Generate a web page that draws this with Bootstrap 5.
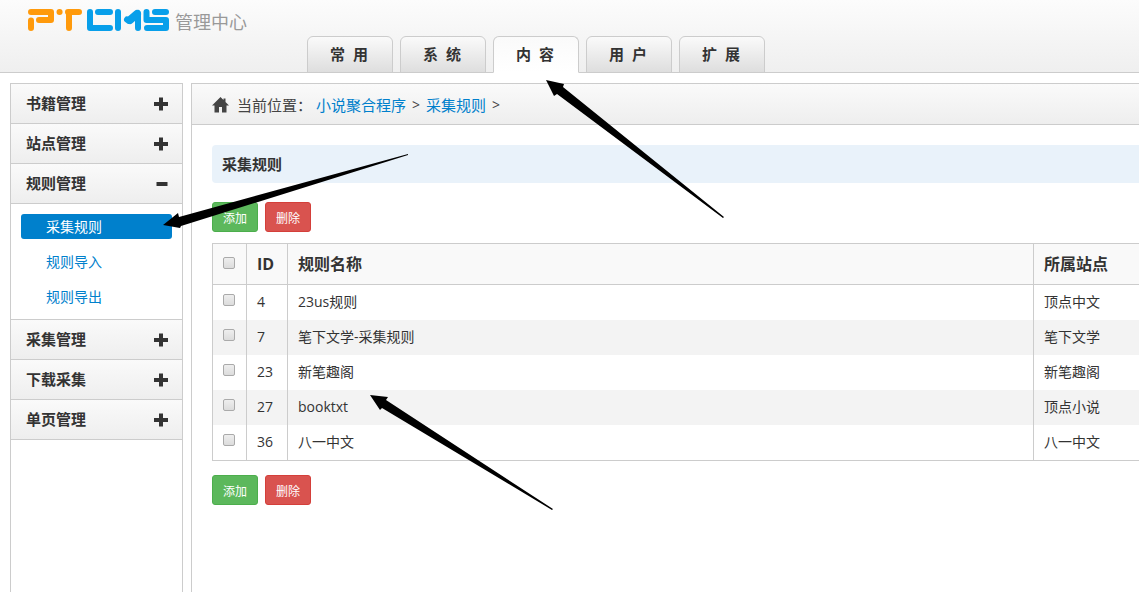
<!DOCTYPE html>
<html lang="zh-CN">
<head>
<meta charset="utf-8">
<meta name="viewport" content="width=device-width, initial-scale=1">
<title>PTCMS 管理中心</title>
<link href="https://cdn.jsdelivr.net/npm/bootstrap@5.3.0/dist/css/bootstrap.min.css" rel="stylesheet">
<style>
  :root { --line: #ccc; --blue: #0080cc; --ink: #333; }
  body { font-family: "Open Sans", "Noto Sans CJK SC", sans-serif; font-size: 14px; line-height: 20px; color: var(--ink); overflow-x: hidden; }
  a { color: var(--blue); text-decoration: none; }
  .topbar { height: 73px; background: linear-gradient(#fcfcfc, #efefef); border-bottom: 1px solid var(--line); padding-left: 28px; }
  .brand-area { width: 279px; padding-top: 9px; gap: 5px; }
  .brand-title { font-size: 18px; line-height: 26px; color: #999; }
  .main-tabs { gap: 7px; margin-bottom: -1px; border: 0; }
  .main-tabs .nav-link { width: 86px; height: 37px; padding: 0 2px 0 0; border: 1px solid var(--line); border-radius: 6px 6px 0 0; margin: 0; background: linear-gradient(#fafafa, #dedede); color: var(--ink); font-size: 15px; font-weight: 700; line-height: 35px; text-align: center; }
  .main-tabs .nav-link.active { background: linear-gradient(#fafafa, #fff); border-color: var(--line) var(--line) #fff; color: var(--ink); }
  .workspace { padding: 10px 0 0 10px; gap: 8px; }
  .side-menu { width: 173px; border: 1px solid var(--line); border-bottom: 0; }
  .menu-head { height: 40px; padding: 0 14px 2px 15px; border: 0; border-bottom: 1px solid var(--line); background: linear-gradient(#fafafa, #eee); color: var(--ink); font-size: 15px; font-weight: 700; }
  .menu-head svg { margin-top: 2px; }
  .submenu { padding: 10px; gap: 10px; border-bottom: 1px solid var(--line); }
  .submenu a { height: 25px; line-height: 25px; padding-left: 25px; border-radius: 3px; }
  .submenu a.current { background: var(--blue); color: #fff; }
  .content-panel { border: solid var(--line); border-width: 1px 0 0 1px; min-width: 0; }
  .crumbs { height: 41px; padding: 2px 0 0 20px; border-bottom: 1px solid var(--line); background: linear-gradient(#fafafa, #eee); font-size: 15px; color: #444; }
  .crumbs .arrow { padding: 0 6px; font-size: 14px; }
  .section-title { height: 38px; line-height: 38px; padding-left: 10px; margin: 0; border-radius: 4px 0 0 4px; background: #e9f2fa; font-size: 15px; font-weight: 700; }
  .panel-body { padding: 20px 0 0 20px; }
  .tools { gap: 7px; }
  .section-title + .tools { margin-top: 19px; }
  .tools .btn { width: 46px; height: 30px; padding: 4px 0 0; font-size: 12px; line-height: 22px; border-radius: 3px; color: #fff; }
  .btn-add { background: #5cb85c; border-color: #4cae4c; }
  .btn-del { background: #d9534f; border-color: #d43f3a; }
  .rules { margin: 11px 0 14px; border: solid var(--line); border-width: 1px 0 1px 1px; border-collapse: separate; border-spacing: 0; table-layout: fixed; color: var(--ink); }
  .rules > :not(caption) > * > * { padding: 0 10px; height: 35px; border: 0 solid var(--line); border-right-width: 1px; vertical-align: middle; box-shadow: none; background: transparent; color: var(--ink); }
  .rules > :not(caption) > * > :last-child { border-right: 0; }
  .rules > thead > tr > th { height: 41px; border-bottom-width: 1px; background: #f9f9f9; font-size: 16px; }
  .rules > tbody > tr > td { padding-bottom: 2px; }
  .rules > tbody > tr:nth-child(even) > td { background: #f3f3f3; }
  .col-tick { width: 34px; } .col-num { width: 41px; } .col-site { width: 105px; }
  .tick { appearance: none; display: block; width: 12px; height: 12px; margin: 0 0 3px; border: 1px solid #aaa; border-radius: 2px; background: linear-gradient(#eee, #dcdcdc); }
  thead .tick { margin-bottom: 2px; }
  .tick:checked { background: var(--blue); }
  .pointers { position: absolute; top: 0; left: 0; pointer-events: none; }
</style>
</head>
<body>
<div class="d-flex flex-column min-vh-100 position-relative">
  <header class="topbar d-flex">
    <div class="brand-area d-flex align-items-start flex-shrink-0">
      <svg width="142" height="23" viewBox="0 0 142 23" fill="none" stroke-width="6" stroke-linejoin="round" stroke-linecap="round" role="img" aria-label="PTCMS">
        <g stroke="#ff9a0c">
          <path d="M3 3H23V11H11M3 11.500V19"/>
          <path d="M31.500 3h.1M40 3H51M41 4V19"/>
        </g>
        <g stroke="#089fea">
          <path d="M62 3V19H82M70 3H82"/>
          <path d="M90 3V19"/><path d="M99 10.500L101 12L110 4V19"/><path d="M102 11L109 5" stroke-width="8"/>
          <path d="M118.500 3V11H138V19H119"/><path d="M127 3H138"/>
        </g>
      </svg>
      <span class="brand-title">管理中心</span>
    </div>
    <ul class="nav nav-tabs main-tabs flex-nowrap align-self-end">
      <li class="nav-item"><a class="nav-link" href="#">常&nbsp; 用</a></li>
      <li class="nav-item"><a class="nav-link" href="#">系&nbsp; 统</a></li>
      <li class="nav-item"><a class="nav-link active" href="#" aria-current="page">内&nbsp; 容</a></li>
      <li class="nav-item"><a class="nav-link" href="#">用&nbsp; 户</a></li>
      <li class="nav-item"><a class="nav-link" href="#">扩&nbsp; 展</a></li>
    </ul>
  </header>

  <svg class="d-none" aria-hidden="true">
    <symbol id="plus" viewBox="0 0 14 14"><path d="M5 0.500h4V5h5v4H9v4.500H5V9H0V5h5z" fill="#333"/></symbol>
    <symbol id="minus" viewBox="0 0 14 14"><path d="M2.500 5h11v4h-11z" fill="#333"/></symbol>
  </svg>

  <div class="workspace d-flex flex-grow-1">
    <nav class="side-menu flex-shrink-0">
      <button class="menu-head d-flex align-items-center justify-content-between w-100" type="button">书籍管理<svg width="14" height="14"><use href="#plus"/></svg></button>
      <button class="menu-head d-flex align-items-center justify-content-between w-100" type="button">站点管理<svg width="14" height="14"><use href="#plus"/></svg></button>
      <button class="menu-head d-flex align-items-center justify-content-between w-100" type="button" aria-expanded="true">规则管理<svg width="14" height="14"><use href="#minus"/></svg></button>
      <div class="submenu d-flex flex-column">
        <a class="current" href="#">采集规则</a>
        <a href="#">规则导入</a>
        <a href="#">规则导出</a>
      </div>
      <button class="menu-head d-flex align-items-center justify-content-between w-100" type="button">采集管理<svg width="14" height="14"><use href="#plus"/></svg></button>
      <button class="menu-head d-flex align-items-center justify-content-between w-100" type="button">下载采集<svg width="14" height="14"><use href="#plus"/></svg></button>
      <button class="menu-head d-flex align-items-center justify-content-between w-100" type="button">单页管理<svg width="14" height="14"><use href="#plus"/></svg></button>
    </nav>

    <main class="content-panel flex-grow-1">
      <div class="crumbs d-flex align-items-center">
        <svg class="me-2" width="17" height="16" viewBox="0 0 17 16" aria-hidden="true"><path d="M8.500 0L11.500 3V1.500h2V5L17 8.500H14.500V15.500H10V10H7V15.500H2.500V8.500H0z" fill="#444"/></svg>
        <span>当前位置：</span>
        <a class="ms-1" href="#">小说聚合程序</a><span class="arrow">&gt;</span>
        <a href="#">采集规则</a><span class="arrow">&gt;</span>
      </div>
      <div class="panel-body">
        <h1 class="section-title">采集规则</h1>
        <div class="tools d-flex">
          <button class="btn btn-add" type="button">添加</button>
          <button class="btn btn-del" type="button">删除</button>
        </div>
        <table class="table rules">
          <colgroup><col class="col-tick"><col class="col-num"><col><col class="col-site"></colgroup>
          <thead>
            <tr><th><input class="tick" type="checkbox" aria-label="全选"></th><th>ID</th><th>规则名称</th><th>所属站点</th></tr>
          </thead>
          <tbody>
            <tr><td><input class="tick" type="checkbox" aria-label="4"></td><td>4</td><td>23us规则</td><td>顶点中文</td></tr>
            <tr><td><input class="tick" type="checkbox" aria-label="7"></td><td>7</td><td>笔下文学-采集规则</td><td>笔下文学</td></tr>
            <tr><td><input class="tick" type="checkbox" aria-label="23"></td><td>23</td><td>新笔趣阁</td><td>新笔趣阁</td></tr>
            <tr><td><input class="tick" type="checkbox" aria-label="27"></td><td>27</td><td>booktxt</td><td>顶点小说</td></tr>
            <tr><td><input class="tick" type="checkbox" aria-label="36"></td><td>36</td><td>八一中文</td><td>八一中文</td></tr>
          </tbody>
        </table>
        <div class="tools d-flex">
          <button class="btn btn-add" type="button">添加</button>
          <button class="btn btn-del" type="button">删除</button>
        </div>
      </div>
    </main>
  </div>

  <!-- hand-drawn pointers over the page -->
  <svg class="pointers" width="760" height="520" viewBox="0 0 760 520" aria-hidden="true">
    <path d="M546 80L564 84L563 87L724 217L723 218L557 94L554 96Z"/>
    <path d="M163 225L178 213L179 217L408 154V155L181 226L180 228Z"/>
    <path d="M370 395L388 397L386 400L553 509L552 510L382 408L380 410Z"/>
  </svg>
</div>
<script src="https://cdn.jsdelivr.net/npm/bootstrap@5.3.0/dist/js/bootstrap.bundle.min.js"></script>
</body>
</html>
